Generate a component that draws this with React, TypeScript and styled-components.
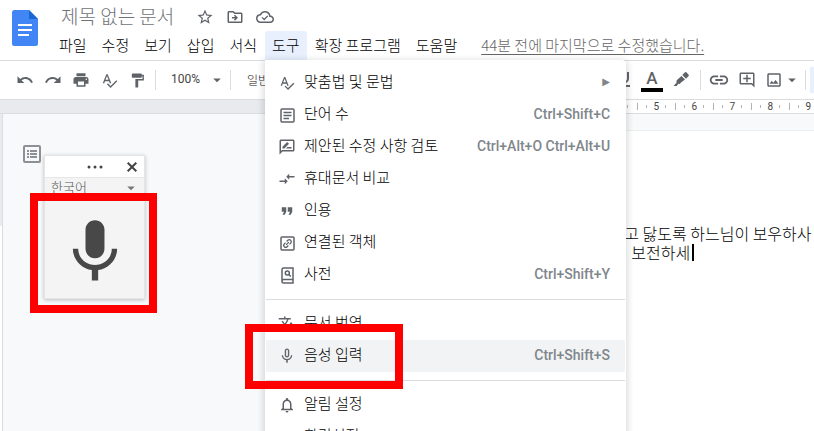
import React from "react";
import styled, { createGlobalStyle, css } from "styled-components";
import {
  MdArrowDropDown,
  MdCompareArrows,
  MdFormatPaint,
  MdFormatQuote,
  MdLink,
  MdMic,
  MdMicNone,
  MdNotificationsNone,
  MdOutlineAddComment,
  MdOutlineDriveFileMove,
  MdOutlineImage,
  MdOutlineRateReview,
  MdPrint,
  MdRedo,
  MdSpellcheck,
  MdStarBorder,
  MdTranslate,
  MdUndo,
} from "react-icons/md";

const korean = `"Noto Sans CJK KR", "Noto Sans", sans-serif`;
const latin = `Roboto, "Noto Sans CJK KR", sans-serif`;

const GlobalStyle = createGlobalStyle`
  * { box-sizing: border-box; }
  body { margin: 0; background: #fff; font-family: ${korean}; color: #202124; }
  button, input, select { font-family: inherit; color: inherit; margin: 0; }
  button { border: 0; background: none; padding: 0; }
`;

const Shell = styled.div`
  display: flex;
  flex-direction: column;
  height: 100vh;
  overflow: hidden;
`;

/* Header */

const Header = styled.header`
  display: flex;
  border-bottom: 1px solid #dadce0;
`;

const LogoLink = styled.a`
  padding: 10px 14px 0 12px;
  line-height: 0;
`;

const HeaderText = styled.div`
  flex: 1;
  min-width: 0;
`;

const TitleRow = styled.div`
  display: flex;
  align-items: center;
  height: 31px;
  padding: 3px 0 0 9px;
`;

const TitleInput = styled.input`
  width: 129px;
  height: 28px;
  padding: 0 0 3px;
  border: 0;
  outline: 0;
  background: transparent;
  font-size: 19px;
  font-weight: 300;
  color: #6f7377;
`;

const TitleButton = styled.button`
  display: flex;
  align-items: center;
  justify-content: center;
  width: 30px;
  height: 28px;
  color: #5f6368;
  font-size: 18px;
`;

const MenuBar = styled.nav`
  display: flex;
  gap: 1px;
  height: 29px;
  white-space: nowrap;
`;

const MenuSlot = styled.div`
  position: relative;
  display: flex;
`;

const MenuButton = styled.button<{ $open?: boolean }>`
  padding: 0 7px 2px;
  border-radius: 3px 3px 0 0;
  font-size: 15px;
  font-weight: 300;
  line-height: 27px;
  color: #000;
  background: ${(p) => (p.$open ? "#e8f0fe" : "transparent")};
`;

const LastEdit = styled.a`
  margin-left: 16px;
  font-size: 15px;
  font-weight: 300;
  line-height: 27px;
  color: #666;
  text-decoration: underline;
  text-underline-offset: 3px;
`;

/* Drop-down menu */

const MenuPanel = styled.div`
  position: absolute;
  z-index: 10;
  top: 100%;
  left: 0;
  width: 361px;
  padding: 7px 1px;
  background: #fff;
  border-radius: 0 4px 4px 4px;
  box-shadow: 0 2px 6px 2px rgba(60, 64, 67, 0.18);
`;

const MenuItem = styled.button<{ $active?: boolean }>`
  display: flex;
  align-items: center;
  width: 100%;
  height: 32px;
  padding: 0 15px 0 12px;
  text-align: left;
  background: ${(p) => (p.$active ? "#f1f3f4" : "transparent")};
`;

const ItemIcon = styled.span`
  display: flex;
  justify-content: center;
  width: 18px;
  margin-right: 8px;
  font-size: 18px;
  color: #5f6368;
`;

const ItemLabel = styled.span`
  flex: 1;
  padding-bottom: 4px;
  font-size: 15px;
  font-weight: 300;
  line-height: 28px;
  color: #000;
`;

const Shortcut = styled.span`
  padding-bottom: 2px;
  font-family: ${latin};
  font-size: 14px;
  font-weight: 500;
  color: #80868b;
`;

const SubmenuArrow = styled(Shortcut)`
  padding: 0 0 3px;
  font-size: 10px;
  font-family: "DejaVu Sans", sans-serif;
`;

const Divider = styled.hr`
  height: 1px;
  margin: 8px 0;
  border: 0;
  background: #dadce0;
`;

const ItemHolder = styled.div`
  position: relative;
`;

const frame = css`
  position: absolute;
  z-index: 20;
  border: 8px solid #f00;
  pointer-events: none;
`;

const ItemFrame = styled.div`
  ${frame}
  top: -16px;
  left: -21px;
  width: 158px;
  height: 65px;
`;

/* Toolbar */

const Toolbar = styled.div`
  display: flex;
  align-items: center;
  justify-content: space-between;
  flex: none;
  height: 39px;
  padding-left: 11px;
  border-bottom: 1px solid #dadce0;
  overflow: hidden;
`;

const ToolGroup = styled.div`
  display: flex;
  align-items: center;
`;

const ToolButton = styled.button`
  display: flex;
  flex-direction: column;
  align-items: center;
  justify-content: center;
  width: 28px;
  height: 30px;
  font-size: 18px;
  color: #5f6368;
`;

const ImageButton = styled(ToolButton)`
  flex-direction: row;
  justify-content: flex-end;
  width: 40px;
`;

const HighlightButton = styled(ToolButton)`
  width: 30px;
`;

const Separator = styled.span<{ $gap: number }>`
  width: 1px;
  height: 20px;
  margin: 0 ${(p) => p.$gap}px 0 4px;
  background: #dadce0;
`;

const ActiveMode = styled.span`
  width: 4px;
  height: 26px;
  background: #e8f0fe;
`;

const SelectBox = styled.label`
  position: relative;
  display: flex;
  align-items: center;
  justify-content: space-between;
  color: #5f6368;
  font-size: 18px;
`;

const ZoomSelect = styled.select`
  appearance: none;
  width: 37px;
  padding: 0 0 2px;
  border: 0;
  background: transparent;
  font-family: ${latin};
  font-size: 12px;
  color: #444;
`;

const StyleButton = styled.button`
  padding-bottom: 2px;
  font-size: 12px;
  font-weight: 300;
  color: #222;
`;

const LetterA = styled.span`
  font-family: ${latin};
  font-size: 17px;
  font-weight: 500;
  line-height: 18px;
`;

const ColourBar = styled.span`
  width: 22px;
  height: 4px;
  margin-top: 1px;
  background: #000;
`;

/* Ruler */

const Ruler = styled.div`
  display: flex;
  flex: none;
  height: 14px;
  border-bottom: 1px solid #dadce0;
  overflow: hidden;
`;

const RulerMargin = styled.div`
  flex: 0 0 466px;
  background: #e8eaed;
`;

const RulerScale = styled.div`
  display: flex;
  flex: 1;
  min-width: 0;
  padding-left: 5px;
`;

const RulerCell = styled.div`
  display: grid;
  flex: none;
  grid-template-columns: repeat(4, 1fr);
  align-items: center;
  justify-items: center;
  width: 38px;
  font-family: ${latin};
  font-size: 10px;
  line-height: 13px;
  color: #444;
`;

const Tick = styled.span<{ $long?: boolean }>`
  width: 1px;
  height: ${(p) => (p.$long ? 7 : 3)}px;
  background: #b0b3b8;
`;

/* Canvas */

const Canvas = styled.main`
  display: flex;
  flex: 1;
  min-height: 0;
  background: #f8f9fa;
`;

const SideRuler = styled.div`
  width: 3px;
  border-right: 1px solid #dadce0;
  background: #fff;
`;

const SideRulerMargin = styled.div`
  height: 112px;
  background: #e8eaed;
`;

const Gutter = styled.aside`
  position: relative;
  flex: 0 0 370px;
  padding: 29px 0 0 18px;
`;

const OutlineButton = styled.button`
  display: block;
  line-height: 0;
`;

const Page = styled.article`
  flex: 1;
  min-width: 0;
  margin-top: 16px;
  padding: 93px 0 0 97px;
  border-top: 1px solid #eceef0;
  background: #fff;
`;

const Line = styled.p`
  display: flex;
  align-items: center;
  margin: 0;
  font-size: 16px;
  font-weight: 300;
  line-height: 19px;
  white-space: nowrap;
  color: #000;
`;

const Caret = styled.span`
  width: 2px;
  height: 17px;
  margin-left: 2px;
  background: #000;
`;

/* Voice typing widget */

const VoiceWidget = styled.section`
  position: absolute;
  top: 41px;
  left: 41px;
  width: 101px;
  border: 1px solid #e6e6e6;
  background: #f4f4f4;
  box-shadow: 0 1px 4px rgba(0, 0, 0, 0.25);
`;

const VoiceHeader = styled.div`
  display: grid;
  grid-template-columns: 1fr auto 1fr;
  align-items: center;
  height: 22px;
  background: #fff;
  border-bottom: 1px solid #e6e6e6;
  color: #444;
`;

const HeaderButton = styled.button`
  grid-column: 2;
  line-height: 0;
`;

const CloseButton = styled(HeaderButton)`
  grid-column: 3;
  justify-self: end;
  margin-right: 7px;
`;

const LanguageRow = styled(SelectBox)`
  height: 20px;
  padding: 0 4px 0 6px;
  color: #777;
`;

const LanguageSelect = styled.select`
  appearance: none;
  flex: 1;
  min-width: 0;
  padding: 0 0 2px;
  border: 0;
  background: transparent;
  font-size: 13px;
  font-weight: 300;
  line-height: 18px;
  color: #555;
`;

const MicButton = styled.button`
  display: flex;
  align-items: center;
  justify-content: center;
  width: 100%;
  height: 100px;
  padding: 7px 0 0 1px;
  font-size: 76px;
  color: #484848;
`;

const VoiceFrame = styled.div`
  ${frame}
  top: 37px;
  left: -15px;
  width: 127px;
  height: 120px;
`;

/* Icons */

const DocsLogo = () => (
  <svg width="26" height="36" viewBox="0 0 26 36" aria-hidden="true">
    <path d="M2.500 0H17l9 9v24.500a2.500 2.500 0 0 1-2.500 2.500h-21A2.500 2.500 0 0 1 0 33.500v-31A2.500 2.500 0 0 1 2.500 0z" fill="#4285f4" />
    <path d="M17 0l9 9h-9z" fill="#1967d2" />
    <path d="M6 14h14v2H6zM6 19h14v2H6zM6 24h11v2H6z" fill="#fff" />
  </svg>
);

const CloudDoneIcon = () => (
  <svg width="18" height="18" viewBox="0 0 24 24" aria-hidden="true">
    <path
      d="M19.350 10.040A7.490 7.490 0 0 0 12 4C9.110 4 6.600 5.640 5.350 8.040A5.994 5.994 0 0 0 0 14c0 3.310 2.690 6 6 6h13c2.760 0 5-2.240 5-5 0-2.640-2.050-4.780-4.650-4.960zM19 18H6c-2.210 0-4-1.790-4-4 0-2.050 1.530-3.760 3.560-3.970l1.070-.11.5-.95A5.469 5.469 0 0 1 12 6c2.620 0 4.880 1.860 5.390 4.430l.3 1.500 1.530.11A2.980 2.980 0 0 1 22 15c0 1.650-1.350 3-3 3z"
      fill="currentColor"
    />
    <path d="M8 12.500l3 2.800 4.700-4.800" fill="none" stroke="currentColor" strokeWidth="1.800" />
  </svg>
);

const HighlighterIcon = () => (
  <svg width="16" height="16" viewBox="0 0 16 16" fill="currentColor" aria-hidden="true">
    <path d="M9.300 3L11.700.600a1.300 1.300 0 0 1 1.900 0l1.800 1.800a1.300 1.300 0 0 1 0 1.900L13 6.700z" />
    <path d="M8.500 4l3.500 3.500-4 2.900-1.200 1.500-1.400-.1L3.700 14H.500l3.200-3.600a2 2 0 0 1 .5-2.600z" />
  </svg>
);

const WordCountIcon = () => (
  <svg width="15" height="15" viewBox="0 0 15 15" fill="none" stroke="currentColor" strokeWidth="1.500" aria-hidden="true">
    <rect x="1" y="1" width="13" height="13" rx="1" />
    <path d="M3.500 4.500h8M3.500 7.500h8M3.500 10.500h5.500" />
  </svg>
);

const LinkedObjectIcon = () => (
  <svg width="15" height="15" viewBox="0 0 15 15" fill="none" stroke="currentColor" strokeWidth="1.500" aria-hidden="true">
    <rect x="1" y="1" width="13" height="13" rx="1" />
    <g transform="rotate(-45 7.500 7.500)" strokeWidth="1.300">
      <path d="M6.700 5.500H5a2 2 0 0 0 0 4h1.700M8.300 5.500H10a2 2 0 0 1 0 4H8.300M5.500 7.500h4" />
    </g>
  </svg>
);

const DictionaryIcon = () => (
  <svg width="13" height="17" viewBox="0 0 13 17" fill="none" stroke="currentColor" strokeWidth="1.500" aria-hidden="true">
    <path d="M12 12.500H2.700a1.700 1.700 0 0 0 0 3.500H12zM12 12.500V1H2.500A1.500 1.500 0 0 0 1 2.500v12" />
    <circle cx="6.300" cy="6" r="2" />
    <path d="M7.700 7.400l2.100 2.100" />
  </svg>
);

const OutlineIcon = () => (
  <svg width="22" height="22" viewBox="0 0 22 22" aria-hidden="true">
    <rect x="3" y="3" width="16" height="16" rx="1" fill="none" stroke="#8d9095" strokeWidth="2" />
    <path d="M6 7h2v2H6zM9 7h7v2H9zM6 10h2v2H6zM9 10h7v2H9zM6 13h2v2H6zM9 13h7v2H9z" fill="#8d9095" />
  </svg>
);

const UnderlineIcon = () => (
  <svg width="14" height="16" viewBox="0 0 14 16" fill="none" stroke="currentColor" strokeWidth="2" aria-hidden="true">
    <path d="M3 0v6.500a4 4 0 0 0 8 0V0M1 14h12" />
  </svg>
);

const MoreIcon = () => (
  <svg width="16" height="4" viewBox="0 0 16 4" fill="currentColor" aria-hidden="true">
    <circle cx="2" cy="2" r="1.500" />
    <circle cx="8" cy="2" r="1.500" />
    <circle cx="14" cy="2" r="1.500" />
  </svg>
);

const CloseIcon = () => (
  <svg width="10" height="10" viewBox="0 0 10 10" fill="none" stroke="currentColor" strokeWidth="2" aria-hidden="true">
    <path d="M.700.700l8.600 8.600M9.300.700L.700 9.300" />
  </svg>
);

type Entry = {
  label: string;
  icon: React.ReactNode;
  keys?: string;
  submenu?: boolean;
  active?: boolean;
};

const groups: Entry[][] = [
  [
    { label: "맞춤법 및 문법", icon: <MdSpellcheck size={16} />, submenu: true },
    { label: "단어 수", icon: <WordCountIcon />, keys: "Ctrl+Shift+C" },
    { label: "제안된 수정 사항 검토", icon: <MdOutlineRateReview />, keys: "Ctrl+Alt+O Ctrl+Alt+U" },
    { label: "휴대문서 비교", icon: <MdCompareArrows /> },
    { label: "인용", icon: <MdFormatQuote size={20} /> },
    { label: "연결된 객체", icon: <LinkedObjectIcon /> },
    { label: "사전", icon: <DictionaryIcon />, keys: "Ctrl+Shift+Y" },
  ],
  [
    { label: "문서 번역", icon: <MdTranslate /> },
    { label: "음성 입력", icon: <MdMicNone />, keys: "Ctrl+Shift+S", active: true },
  ],
  [
    { label: "알림 설정", icon: <MdNotificationsNone /> },
    { label: "환경설정", icon: null },
  ],
];

const ToolsMenu = () => (
  <MenuPanel>
    {groups.map((group, i) => (
      <React.Fragment key={i}>
        {i > 0 && <Divider />}
        {group.map((item) => (
          <ItemHolder key={item.label}>
            <MenuItem $active={item.active}>
              <ItemIcon>{item.icon}</ItemIcon>
              <ItemLabel>{item.label}</ItemLabel>
              {item.submenu && <SubmenuArrow>▶</SubmenuArrow>}
              {item.keys && <Shortcut>{item.keys}</Shortcut>}
            </MenuItem>
            {item.active && <ItemFrame />}
          </ItemHolder>
        ))}
      </React.Fragment>
    ))}
  </MenuPanel>
);

const menus = ["파일", "수정", "보기", "삽입", "서식", "도구", "확장 프로그램", "도움말"];

export default function App() {
  return (
    <Shell>
      <GlobalStyle />
      <Header>
        <LogoLink href="#" aria-label="문서 홈">
          <DocsLogo />
        </LogoLink>
        <HeaderText>
          <TitleRow>
            <TitleInput aria-label="문서 제목" defaultValue="제목 없는 문서" />
            <TitleButton aria-label="별표"><MdStarBorder /></TitleButton>
            <TitleButton aria-label="이동"><MdOutlineDriveFileMove /></TitleButton>
            <TitleButton aria-label="저장 상태"><CloudDoneIcon /></TitleButton>
          </TitleRow>
          <MenuBar>
            {menus.map((name) => (
              <MenuSlot key={name}>
                <MenuButton $open={name === "도구"}>{name}</MenuButton>
                {name === "도구" && <ToolsMenu />}
              </MenuSlot>
            ))}
            <LastEdit href="#">44분 전에 마지막으로 수정했습니다.</LastEdit>
          </MenuBar>
        </HeaderText>
      </Header>

      <Toolbar>
        <ToolGroup>
          <ToolButton aria-label="실행취소"><MdUndo /></ToolButton>
          <ToolButton aria-label="재실행"><MdRedo /></ToolButton>
          <ToolButton aria-label="인쇄"><MdPrint /></ToolButton>
          <ToolButton aria-label="맞춤법"><MdSpellcheck size={17} /></ToolButton>
          <ToolButton aria-label="서식 복사"><MdFormatPaint size={17} /></ToolButton>
          <Separator $gap={15} />
          <SelectBox>
            <ZoomSelect aria-label="확대/축소" defaultValue="100%">
              <option>100%</option>
            </ZoomSelect>
            <MdArrowDropDown />
          </SelectBox>
          <Separator $gap={16} />
          <StyleButton>일반 텍스트</StyleButton>
        </ToolGroup>
        <ToolGroup>
          <ToolButton aria-label="밑줄"><UnderlineIcon /></ToolButton>
          <ToolButton aria-label="텍스트 색상">
            <LetterA>A</LetterA>
            <ColourBar />
          </ToolButton>
          <HighlightButton aria-label="강조 색상"><HighlighterIcon /></HighlightButton>
          <Separator $gap={4} />
          <ToolButton aria-label="링크"><MdLink size={22} /></ToolButton>
          <ToolButton aria-label="댓글 추가"><MdOutlineAddComment /></ToolButton>
          <ImageButton aria-label="이미지"><MdOutlineImage /><MdArrowDropDown /></ImageButton>
          <Separator $gap={4} />
          <ActiveMode />
        </ToolGroup>
      </Toolbar>

      <Ruler>
        <RulerMargin />
        <RulerScale>
          {[1, 2, 3, 4, 5, 6, 7, 8, 9].map((n) => (
            <RulerCell key={n}>
              <Tick />
              <Tick $long />
              <Tick />
              <span>{n}</span>
            </RulerCell>
          ))}
        </RulerScale>
      </Ruler>

      <Canvas>
        <SideRuler>
          <SideRulerMargin />
        </SideRuler>
        <Gutter>
          <OutlineButton aria-label="문서 개요"><OutlineIcon /></OutlineButton>
          <VoiceWidget aria-label="음성 입력">
            <VoiceHeader>
              <HeaderButton aria-label="더보기"><MoreIcon /></HeaderButton>
              <CloseButton aria-label="닫기"><CloseIcon /></CloseButton>
            </VoiceHeader>
            <LanguageRow>
              <LanguageSelect aria-label="언어" defaultValue="한국어">
                <option>한국어</option>
              </LanguageSelect>
              <MdArrowDropDown />
            </LanguageRow>
            <MicButton aria-label="말하기"><MdMic /></MicButton>
            <VoiceFrame />
          </VoiceWidget>
        </Gutter>
        <Page>
          <Line>동해물과 백두산이 마르고 닳도록 하느님이 보우하사</Line>
          <Line>
            대한 사람 대한으로 길이 보전하세
            <Caret />
          </Line>
        </Page>
      </Canvas>
    </Shell>
  );
}
